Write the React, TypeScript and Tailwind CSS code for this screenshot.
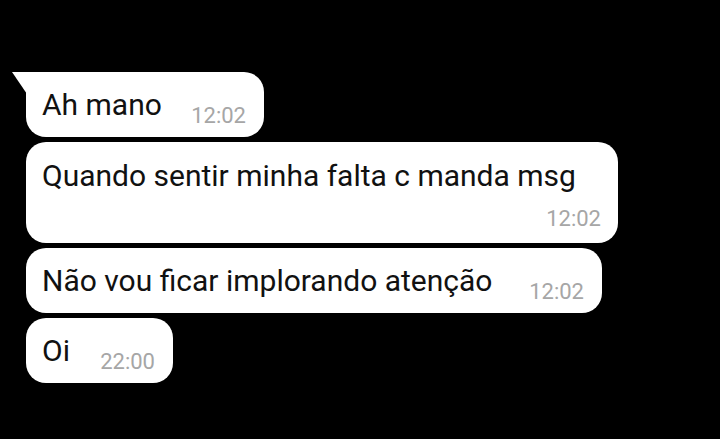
const messages = [
  { text: 'Ah mano', time: '12:02', width: 'w-[238px]', first: true },
  { text: 'Quando sentir minha falta c manda msg', time: '12:02', width: 'w-[592px]', stacked: true },
  { text: 'Não vou ficar implorando atenção', time: '12:02', width: 'w-[576px]' },
  { text: 'Oi', time: '22:00', width: 'w-[147px]' },
];

function Tail() {
  return (
    <svg className="absolute -left-[14px] top-0" width="15" height="22" viewBox="0 0 15 22">
      <path d="M0 0 H15 V22 Z" fill="#ffffff" />
    </svg>
  );
}

export default function App() {
  return (
    <div
      className="h-[439px] w-[720px] overflow-hidden bg-black pl-[26px] pt-[72px]"
      style={{ fontFamily: 'Roboto, "Noto Sans", sans-serif' }}
    >
      <div className="flex flex-col gap-[5px]">
        {messages.map((m) =>
          m.stacked ? (
            <div
              key={m.text}
              className={`flex flex-col rounded-[20px] bg-white pb-[12px] pl-4 pr-[17px] pt-[16px] ${m.width}`}
            >
              <span className="text-[30px] leading-[35px] text-[#111111]">{m.text}</span>
              <span className="mt-[13px] self-end text-[22px] leading-[25px] text-[#a6a6a6]">{m.time}</span>
            </div>
          ) : (
            <div
              key={m.text}
              className={`relative flex items-end justify-between rounded-[20px] bg-white pb-[9px] pl-4 pr-[18px] pt-[15px] ${m.width} ${m.first ? 'rounded-tl-none' : ''}`}
            >
              {m.first && <Tail />}
              <span className="mb-[6px] text-[30px] leading-[35px] text-[#111111]">{m.text}</span>
              <span className="text-[22px] leading-[25px] text-[#a6a6a6]">{m.time}</span>
            </div>
          )
        )}
      </div>
    </div>
  );
}
